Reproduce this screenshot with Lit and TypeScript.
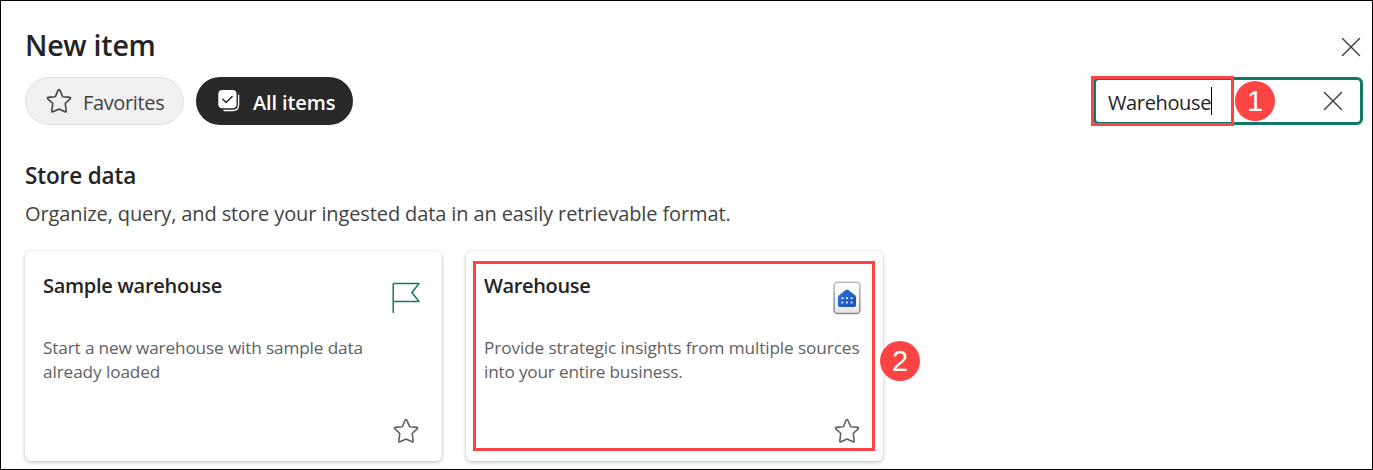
import { LitElement, html, css, svg, nothing } from "lit";
import { customElement, property } from "lit/decorators.js";

const star = html`<svg width="26" height="26" viewBox="0 0 26 26" fill="none" stroke="currentColor" stroke-width="1.6" stroke-linejoin="round">
  <path d="M12.2 2Q13 .9 13.8 2L16.4 8.1Q16.6 8.6 17.2 8.7L23.8 9.4Q25.2 9.7 24.2 10.8L19.6 15Q19.2 15.4 19.3 16L20.2 22.9Q20.3 24.3 19 23.8L13.5 21.2Q13 21 12.5 21.2L7 23.8Q5.7 24.3 5.8 22.9L6.7 16Q6.8 15.4 6.4 15L1.8 10.8Q.8 9.7 2.2 9.4L8.8 8.7Q9.4 8.6 9.6 8.1Z"/>
</svg>`;

const cross = html`<svg width="20" height="20" viewBox="0 0 20 20" fill="none" stroke="#424242" stroke-width="1.5" stroke-linecap="round">
  <path d="M1.5 1.5L18.5 18.5M18.5 1.5L1.5 18.5"/>
</svg>`;

const stack = html`<svg width="24" height="24" viewBox="0 0 24 24" fill="none">
  <path d="M21.6 6.2V15.4Q21.6 21.5 15.5 21.5H7" stroke="#fff" stroke-width="1.3" stroke-linecap="round"/>
  <rect x="1.3" y="1.1" width="18.2" height="18.2" rx="4" fill="#fff"/>
  <path d="M5.9 10.3L9.1 13.5L15.1 7.5" stroke="#292929" stroke-width="1.5" stroke-linecap="round" stroke-linejoin="round"/>
</svg>`;

const flag = html`<svg width="30" height="34" viewBox="0 0 30 34" fill="none" stroke="#117865" stroke-width="1.5" stroke-linecap="round" stroke-linejoin="round">
  <path d="M2.2 31.5V3.3Q2.2 2.5 3 2.5H28L20.9 11.5L28 20.5H2.2"/>
</svg>`;

const house = html`<svg width="30" height="34" viewBox="0 0 30 34">
  <defs>
    <linearGradient id="tile" x1="0" y1="0" x2="0" y2="1"><stop stop-color="#fff"/><stop offset="1" stop-color="#e6e6e6"/></linearGradient>
    <linearGradient id="edge" x1="0" y1="0" x2="0" y2="1"><stop stop-color="#bbb"/><stop offset="1" stop-color="#888"/></linearGradient>
    <linearGradient id="roof" x1="0" y1="0" x2="1" y2="1"><stop stop-color="#2b74e2"/><stop offset="1" stop-color="#1b4fa6"/></linearGradient>
  </defs>
  <rect x="2.1" y="1.3" width="25.8" height="31.2" rx="3.6" fill="url(#tile)" stroke="url(#edge)" stroke-width="1.5"/>
  <path d="M13.6 9Q15 8 16.4 9L22.9 14.2Q24 15.1 24 16.6V23.4Q24 26 21.4 26H8.6Q6 26 6 23.4V16.6Q6 15.1 7.1 14.2Z" fill="url(#roof)"/>
  <g fill="#cfe4ff">${[10.4, 15, 19.6].map((x) => [17.2, 21.6].map((y) => svg`<circle cx=${x} cy=${y} r="1.15"/>`))}</g>
</svg>`;

@customElement("item-card")
export class ItemCard extends LitElement {
  @property() heading = "";
  @property({ attribute: false }) lines: string[] = [];
  @property({ attribute: false }) icon: unknown = nothing;
  @property({ type: Boolean }) marked = false;

  static styles = css`
    :host { display: flex; flex-direction: column; position: relative; box-sizing: border-box; width: 417px; height: 210px; padding: 18px; background: #fff; border-radius: 6px; box-shadow: 0 0 3px rgba(0,0,0,.14), 0 2px 4px rgba(0,0,0,.16); }
    .top { display: flex; justify-content: space-between; height: 67px; }
    h3 { margin: 0; font-size: 20px; line-height: 33px; font-weight: 600; color: #242424; letter-spacing: var(--head-track, 0); white-space: nowrap; }
    .icon { padding: 12px 3px 0 0; }
    svg { display: block; }
    p { margin: 0; font-size: 17.2px; line-height: 24px; color: #616161; white-space: nowrap; }
    .line { display: block; }
    .l0 { letter-spacing: var(--track0, 0); }
    .l1 { letter-spacing: var(--track1, 0); }
    .foot { margin-top: auto; margin-bottom: -1px; display: flex; justify-content: flex-end; padding-right: 5px; color: #616161; }
    .mark { position: absolute; left: 7px; top: 10px; width: 396px; height: 184px; border: 3px solid #fc4444; }
    .badge { position: absolute; left: 414px; top: 90px; width: 40px; height: 40px; border-radius: 50%; background: #fc4444; color: #fff; font: 29px/40px "Liberation Sans", sans-serif; text-align: center; }
  `;

  render() {
    return html`
      <div class="top"><h3>${this.heading}</h3><div class="icon">${this.icon}</div></div>
      <p>${this.lines.map((t, i) => html`<span class="line"><span class="l${i}">${t}</span></span>`)}</p>
      <div class="foot">${star}</div>
      ${this.marked ? html`<div class="mark"></div><div class="badge">2</div>` : nothing}
    `;
  }
}

@customElement("app-root")
export class AppRoot extends LitElement {
  static styles = css`
    :host { display: block; box-sizing: border-box; width: 1373px; height: 470px; overflow: hidden; border: 1px solid #000; background: #fff; padding: 24px 9px 0 24px; font-family: "Open Sans", "Noto Sans", sans-serif; color: #242424; }
    svg { display: block; }
    .head { display: flex; justify-content: space-between; height: 52px; }
    h1 { margin: 0; font-size: 28.6px; line-height: 39px; font-weight: 600; letter-spacing: -.25px; }
    .close { padding: 12px 2px 0 0; }
    .bar { display: flex; height: 48px; gap: 12px; }
    .pill { box-sizing: border-box; height: 48px; border-radius: 24px; display: flex; align-items: center; font-size: 20px; line-height: 28px; white-space: nowrap; }
    .fav { width: 159px; padding-left: 20px; gap: 11px; background: #f0f0f0; border: 1px solid #e0e0e0; color: #424242; letter-spacing: -.36px; }
    .all { width: 157px; padding-left: 21px; gap: 12px; background: #292929; color: #fff; font-weight: 600; letter-spacing: -.12px; }
    .pill span { padding-top: 3px; }
    .search { position: relative; box-sizing: border-box; width: 270px; height: 48px; margin-left: auto; border: 3px solid #117865; border-radius: 6px; display: flex; align-items: center; padding: 0 17px 0 12px; font-size: 20px; }
    .query { letter-spacing: -.36px; padding-top: 2px; }
    .caret { width: 1px; height: 28px; background: #000; }
    .clear { margin-left: auto; }
    .mark { position: absolute; left: -5px; top: -4px; width: 137px; height: 44px; border: 3px solid #fc4444; }
    .badge { position: absolute; left: 139px; top: 1px; width: 40px; height: 40px; border-radius: 50%; background: #fc4444; color: #fff; font: 29px/40px "Liberation Sans", sans-serif; text-align: center; }
    h2 { margin: 34px 0 0; font-size: 22.5px; line-height: 33px; font-weight: 600; letter-spacing: -.13px; }
    .sub { margin: 7px 0 0; font-size: 20px; line-height: 30px; color: #424242; white-space: nowrap; letter-spacing: -.115px; }
    .cards { display: flex; gap: 24px; margin-top: 22px; }
    .sample { --head-track: -.27px; --track0: -.14px; --track1: -.1px; }
    .wh { --head-track: -.36px; --track0: -.1px; --track1: -.18px; }
  `;

  render() {
    return html`
      <div class="head"><h1><span>New item</span></h1><div class="close">${cross}</div></div>
      <div class="bar">
        <div class="pill fav">${star}<span>Favorites</span></div>
        <div class="pill all">${stack}<span>All items</span></div>
        <div class="search">
          <span class="query">Warehouse</span><div class="caret"></div>
          <div class="clear">${cross}</div>
          <div class="mark"></div><div class="badge">1</div>
        </div>
      </div>
      <h2><span>Store data</span></h2>
      <p class="sub"><span>Organize, query, and store your ingested data in an easily retrievable format.</span></p>
      <div class="cards">
        <item-card class="sample" heading="Sample warehouse" .icon=${flag} .lines=${["Start a new warehouse with sample data", "already loaded"]}></item-card>
        <item-card class="wh" marked heading="Warehouse" .icon=${house} .lines=${["Provide strategic insights from multiple sources", "into your entire business."]}></item-card>
      </div>
    `;
  }
}
